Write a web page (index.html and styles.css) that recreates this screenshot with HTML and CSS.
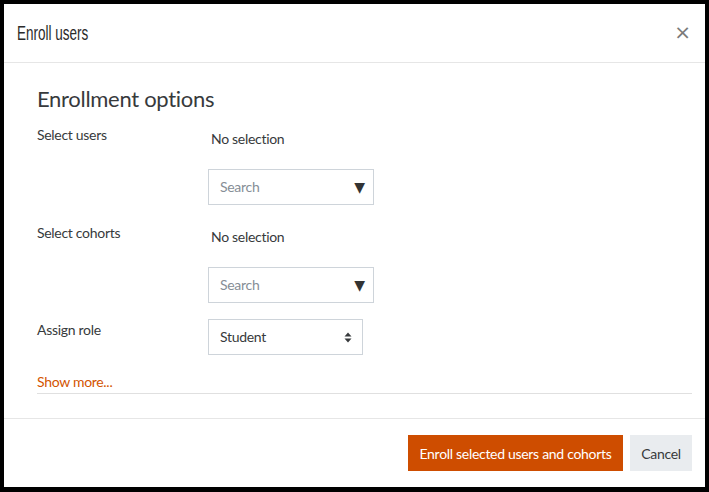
FILE: index.html
```html
<!DOCTYPE html>
<html>
<head>
<meta charset="utf-8">
<link rel="stylesheet" href="styles.css">
</head>
<body>
<div class="dialog">
  <div class="modal-header">
    <h5 class="modal-title">Enroll users</h5>
    <span class="close">&times;</span>
  </div>
  <div class="modal-body">
    <h3 class="section-title">Enrollment options</h3>
    <div class="form-row row-users">
      <div class="label">Select users</div>
      <div class="control">
        <div class="nosel">No selection</div>
        <div class="searchbox"><span class="ph">Search</span><span class="tri">&#9660;</span></div>
      </div>
    </div>
    <div class="form-row row-cohorts">
      <div class="label">Select cohorts</div>
      <div class="control">
        <div class="nosel">No selection</div>
        <div class="searchbox"><span class="ph">Search</span><span class="tri">&#9660;</span></div>
      </div>
    </div>
    <div class="form-row row-role">
      <div class="label label-role">Assign role</div>
      <div class="control">
        <div class="select"><span>Student</span>
          <svg class="updown" width="8" height="11" viewBox="0 0 8 11"><path d="M4 0.5 L7.5 4.5 H0.5 Z M4 10.5 L7.5 6.5 H0.5 Z" fill="#373a3c"/></svg>
        </div>
      </div>
    </div>
    <a class="showmore" href="#">Show more...</a>
    <div class="divider"></div>
  </div>
  <div class="modal-footer">
    <button class="btn btn-primary">Enroll selected users and cohorts</button>
    <button class="btn btn-secondary">Cancel</button>
  </div>
</div>
</body>
</html>
```
FILE: styles.css
```css
html, body {
  margin: 0;
  padding: 0;
  background: #000;
}
body {
  padding: 4px 4px 5px 4px;
  font-family: "Lato", "Open Sans", sans-serif;
  color: #373a3c;
}
.dialog {
  width: 701px;
  height: 483px;
  background: #fff;
  display: flex;
  flex-direction: column;
}
.modal-header {
  height: 58px;
  border-bottom: 1px solid #e6e6e6;
  display: flex;
  align-items: center;
  justify-content: space-between;
  padding: 0 14px 0 13px;
  box-sizing: content-box;
}
.modal-title {
  margin: 0;
  font-family: "Liberation Sans Narrow", "Liberation Sans", sans-serif;
  font-weight: normal;
  font-size: 20px;
  color: #2b2b2b;
  transform: scaleX(0.675);
  transform-origin: left center;
}
.close {
  font-family: "DejaVu Sans", sans-serif;
  font-size: 20px;
  color: #7a7a7a;
  line-height: 1;
  margin-top: -2px;
}
.modal-body {
  flex: 1;
  padding: 22px 13px 0 33px;
}
.section-title {
  margin: 0 0 12px 0;
  font-weight: normal;
  font-size: 22px;
  line-height: 28px;
  letter-spacing: -0.3px;
  color: #373a3c;
}
.form-row {
  display: grid;
  grid-template-columns: 171px auto;
  font-size: 14px;
  line-height: 20px;
  letter-spacing: -0.3px;
}
.row-users { margin-bottom: 18px; }
.row-cohorts { margin-bottom: 16px; }
.label-role { padding-top: 1px; }
.nosel {
  padding-top: 4px;
  padding-left: 3px;
  color: #373a3c;
}
.searchbox {
  margin-top: 20px;
  width: 166px;
  height: 36px;
  box-sizing: border-box;
  border: 1px solid #ced4da;
  display: flex;
  align-items: center;
  justify-content: space-between;
  padding: 0 8px 0 11px;
}
.ph { color: #868e96; }
.tri { font-family: "DejaVu Sans", sans-serif; font-size: 14px; color: #333; letter-spacing: 0; }
.select {
  width: 155px;
  height: 36px;
  box-sizing: border-box;
  border: 1px solid #ced4da;
  display: flex;
  align-items: center;
  justify-content: space-between;
  padding: 0 10px 0 11px;
}
.showmore {
  display: block;
  margin-top: 17px;
  font-size: 14px;
  line-height: 20px;
  letter-spacing: -0.3px;
  color: #d35400;
  text-decoration: none;
}
.divider {
  height: 1px;
  background: #e0e0e0;
  margin-top: 1px;
}
.modal-footer {
  border-top: 1px solid #e6e6e6;
  padding: 16px 13px 16px 0;
  display: flex;
  justify-content: flex-end;
  gap: 7px;
}
.btn {
  height: 36px;
  border: 0;
  border-radius: 0;
  font-family: "Lato", "Open Sans", sans-serif;
  font-size: 14px;
  letter-spacing: -0.3px;
  padding: 0;
  white-space: nowrap;
  cursor: pointer;
}
.btn-primary {
  width: 215px;
  background: #ce4d00;
  color: #fff;
}
.btn-secondary {
  width: 62px;
  background: #e9ecef;
  color: #373a3c;
}
```
